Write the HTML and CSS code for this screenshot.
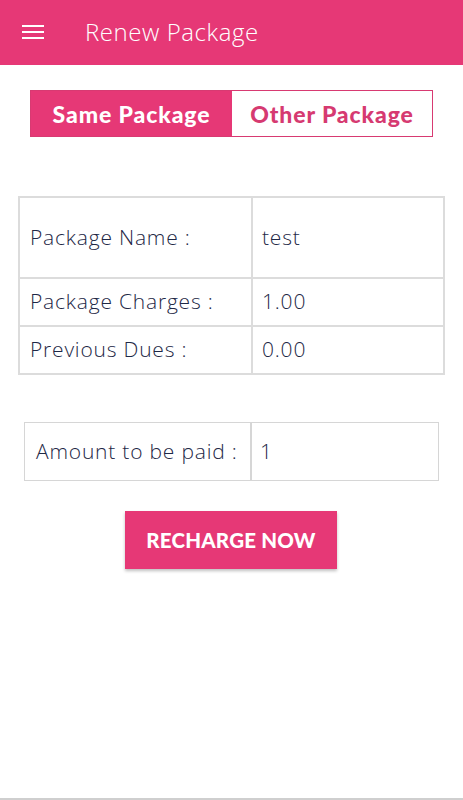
FILE: index.html
```html
<!DOCTYPE html>
<html>
<head>
<meta charset="utf-8">
<link rel="stylesheet" href="styles.css">
</head>
<body>
<header class="appbar">
  <div class="menu">
    <span></span><span></span><span></span>
  </div>
  <div class="title">Renew Package</div>
</header>
<main class="content">
  <div class="toggle">
    <div class="tab active">Same Package</div>
    <div class="tab">Other Package</div>
  </div>
  <div class="info">
    <div class="cell label tall">Package Name :</div>
    <div class="cell value tall">test</div>
    <div class="cell label">Package Charges :</div>
    <div class="cell value">1.00</div>
    <div class="cell label">Previous Dues :</div>
    <div class="cell value">0.00</div>
  </div>
  <div class="amount">
    <div class="acell alabel">Amount to be paid :</div>
    <div class="acell avalue">1</div>
  </div>
  <div class="actions">
    <button class="recharge">RECHARGE NOW</button>
  </div>
</main>
<div class="bottomline"></div>
</body>
</html>
```

FILE: styles.css
```css
* { box-sizing: border-box; }
html, body { margin: 0; padding: 0; }
body {
  width: 463px;
  height: 800px;
  background: #fff;
  font-family: "Open Sans", "Lato", sans-serif;
  color: #1e2846;
  position: relative;
  overflow: hidden;
}
.appbar {
  height: 65px;
  background: #e63876;
  display: flex;
  align-items: center;
}
.menu {
  width: 22px;
  margin-left: 22px;
  display: flex;
  flex-direction: column;
  gap: 4px;
  margin-top: -1px;
}
.menu span {
  display: block;
  height: 2px;
  background: #fff;
}
.title {
  margin-left: 41px;
  color: #fff;
  font-size: 24px;
  font-weight: 300;
  letter-spacing: 0.55px;
  margin-top: -2px;
}
.content {
  padding-top: 25px;
}
.toggle {
  margin: 0 30px;
  height: 47px;
  border: 1px solid #d83a72;
  display: grid;
  grid-template-columns: 201px 1fr;
}
.tab {
  display: flex;
  align-items: center;
  justify-content: center;
  font-family: "Lato", sans-serif;
  font-weight: 900;
  font-size: 23px;
  letter-spacing: 0.9px;
  color: #d63a71;
  background: #fff;
}
.tab.active {
  background: #e63876;
  color: #fff;
}
.info {
  margin: 59px 18px 0;
  display: grid;
  grid-template-columns: 233px 1fr;
  border-top: 2px solid #dcdcdc;
  border-left: 2px solid #dcdcdc;
}
.cell {
  height: 48px;
  border-right: 2px solid #dcdcdc;
  border-bottom: 2px solid #dcdcdc;
  display: flex;
  align-items: center;
  font-size: 21px;
  font-weight: 300;
  letter-spacing: 0.8px;
  padding-bottom: 2px;
}
.cell.tall { height: 81px; padding-bottom: 1px; }
.label { padding-left: 10px; }
.value { padding-left: 9px; }
.amount {
  margin: 47px 24px 0;
  height: 59px;
  display: grid;
  grid-template-columns: 227px 1fr;
  border: 1.5px solid #d6d6d6;
}
.acell {
  display: flex;
  align-items: center;
  font-size: 21px;
  font-weight: 300;
  letter-spacing: 0.8px;
  padding-bottom: 2px;
  color: #1e2846;
}
.alabel {
  padding-left: 11px;
  border-right: 2px solid #d6d6d6;
}
.avalue { padding-left: 8px; }
.actions {
  display: flex;
  justify-content: center;
  padding-top: 30px;
}
.recharge {
  width: 212px;
  height: 58px;
  border: none;
  background: #e63876;
  color: #fff;
  font-family: "Lato", sans-serif;
  font-weight: 900;
  font-size: 20.5px;
  letter-spacing: 0.2px;
  box-shadow: 0 2px 3px rgba(0,0,0,0.25);
  margin-left: -1px;
}
.bottomline {
  position: absolute;
  left: 0;
  right: 0;
  bottom: 0;
  height: 2px;
  background: #cfcfcf;
}
```
